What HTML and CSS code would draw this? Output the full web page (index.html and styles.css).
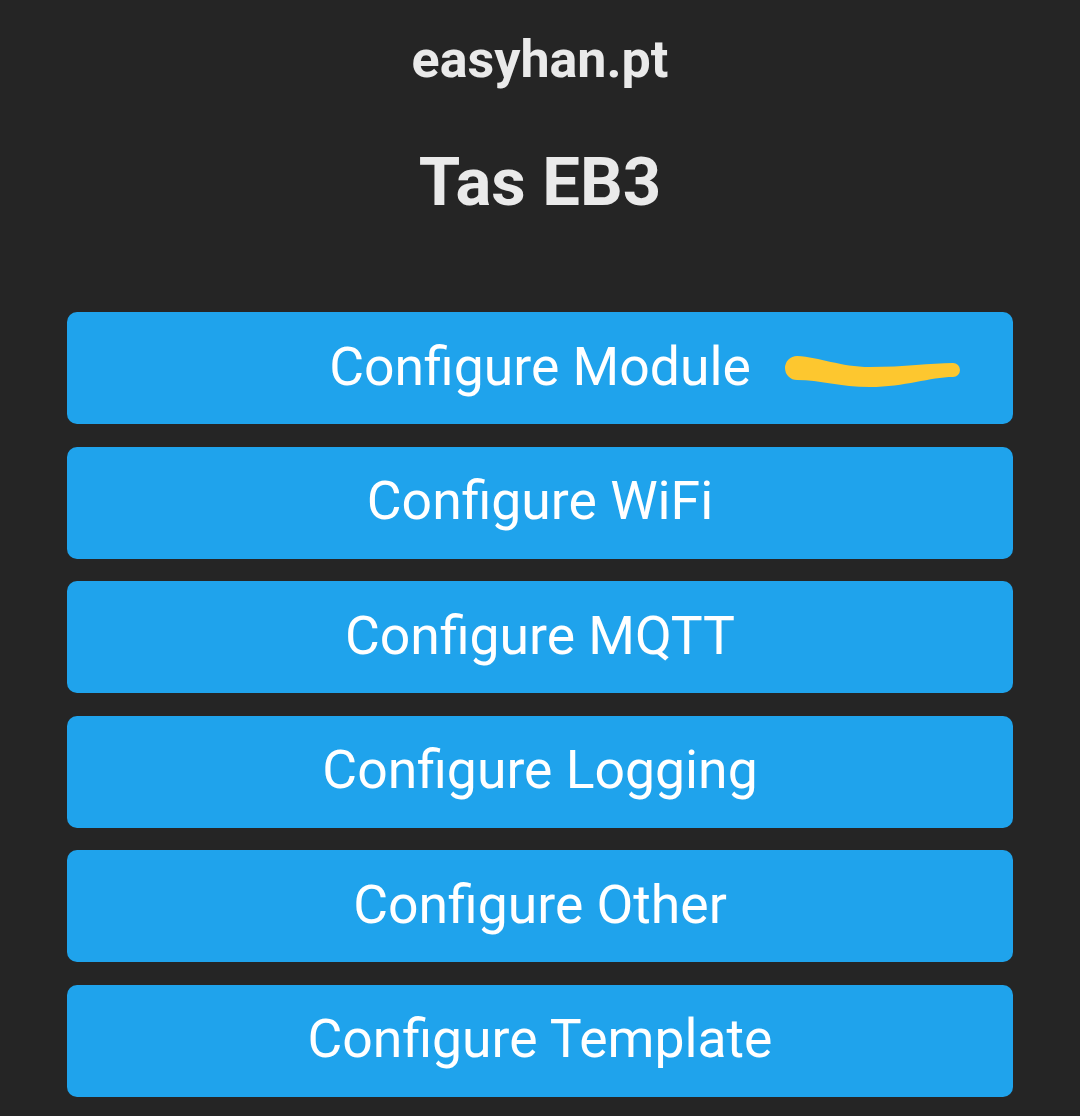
FILE: index.html
```html
<!DOCTYPE html>
<html>
<head>
<meta charset="utf-8">
<link rel="stylesheet" href="styles.css">
</head>
<body>
<div class="page">
  <header class="head">
    <div class="site">easyhan.pt</div>
    <h2 class="device">Tas EB3</h2>
  </header>
  <nav class="menu">
    <button class="btn">Configure Module
      <svg class="mark" width="190" height="45" viewBox="0 0 190 45"><path d="M17 6 C 40 7, 60 17, 90 17 C 125 17, 150 13, 173 13 A 7 7 0 0 1 173 27 C 150 27, 125 37, 90 37 C 60 37, 40 30, 17 30 A 12 12 0 0 1 17 6 Z" fill="#fdc72f"/></svg>
    </button>
    <button class="btn">Configure WiFi</button>
    <button class="btn">Configure MQTT</button>
    <button class="btn">Configure Logging</button>
    <button class="btn">Configure Other</button>
    <button class="btn">Configure Template</button>
  </nav>
</div>
</body>
</html>
```
FILE: styles.css
```css
html, body {
  margin: 0;
  padding: 0;
  background: #252525;
}
body {
  font-family: Roboto, "Liberation Sans", sans-serif;
  color: #eaeaea;
}
.page {
  width: 1080px;
  height: 1116px;
  overflow: hidden;
}
.head {
  display: flex;
  flex-direction: column;
  align-items: center;
}
.site {
  font-size: 52px;
  font-weight: 700;
  margin-top: 30px;
  line-height: 60px;
}
.device {
  font-size: 67px;
  font-weight: 700;
  margin: 0;
  margin-top: 53px;
  line-height: 78px;
}
.menu {
  display: flex;
  flex-direction: column;
  gap: 22.6px;
  padding: 0 67px;
  margin-top: 91px;
}
.btn {
  position: relative;
  height: 112px;
  border: 0;
  border-radius: 10px;
  background: #1fa3ec;
  color: #fff;
  font-family: Roboto, "Liberation Sans", sans-serif;
  font-size: 53.5px;
  padding: 0;
  padding-bottom: 4px;
}
.mark {
  position: absolute;
  left: 713px;
  top: 38px;
}
```
